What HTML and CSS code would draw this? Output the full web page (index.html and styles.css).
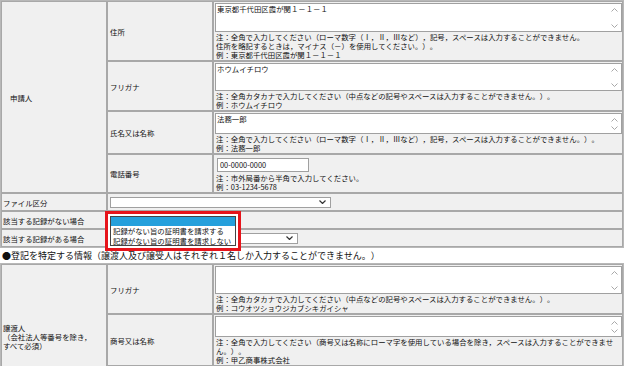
FILE: index.html
```html
<!DOCTYPE html>
<html lang="ja">
<head>
    <meta charset="UTF-8">
    <title>申請書入力</title>
    <link rel="stylesheet" href="styles.css">
</head>
<body>

<!-- 申請人 -->
<table class="form">
    <colgroup><col class="c1"><col class="c2"><col></colgroup>
    <tr>
        <td rowspan="4" class="head indent">申請人</td>
        <td class="label">住所</td>
        <td class="field">
            <div class="area tall">
                <div class="area-text">東京都千代田区霞が関１－１－１</div>
                <div class="scroll">
                    <svg width="7" height="4" viewBox="0 0 7 4"><polyline points="0.5,3.5 3.5,0.5 6.5,3.5" /></svg>
                    <svg width="7" height="4" viewBox="0 0 7 4"><polyline points="0.5,0.5 3.5,3.5 6.5,0.5" /></svg>
                </div>
            </div>
            <div class="note">注：全角で入力してください（ローマ数字（<span class="num">Ⅰ</span>，<span class="num">Ⅱ</span>，<span class="num">Ⅲ</span>など），記号，スペースは入力することができません。<br>住所を略記するときは，マイナス（－）を使用してください。）。<br>例：東京都千代田区霞が関１－１－１</div>
        </td>
    </tr>
    <tr>
        <td class="label">フリガナ</td>
        <td class="field">
            <div class="area">
                <div class="area-text">ホウムイチロウ</div>
                <div class="scroll">
                    <svg width="7" height="4" viewBox="0 0 7 4"><polyline points="0.5,3.5 3.5,0.5 6.5,3.5" /></svg>
                    <svg width="7" height="4" viewBox="0 0 7 4"><polyline points="0.5,0.5 3.5,3.5 6.5,0.5" /></svg>
                </div>
            </div>
            <div class="note">注：全角カタカナで入力してください（中点などの記号やスペースは入力することができません。）。<br>例：ホウムイチロウ</div>
        </td>
    </tr>
    <tr>
        <td class="label">氏名又は名称</td>
        <td class="field">
            <div class="area short">
                <div class="area-text">法務一郎</div>
                <div class="scroll">
                    <svg width="7" height="4" viewBox="0 0 7 4"><polyline points="0.5,3.5 3.5,0.5 6.5,3.5" /></svg>
                    <svg width="7" height="4" viewBox="0 0 7 4"><polyline points="0.5,0.5 3.5,3.5 6.5,0.5" /></svg>
                </div>
            </div>
            <div class="note">注：全角で入力してください（ローマ数字（<span class="num">Ⅰ</span>，<span class="num">Ⅱ</span>，<span class="num">Ⅲ</span>など），記号，スペースは入力することができません。）。<br>例：法務一郎</div>
        </td>
    </tr>
    <tr>
        <td class="label">電話番号</td>
        <td class="field">
            <div class="input">00-0000-0000</div>
            <div class="note">注：市外局番から半角で入力してください。<br>例：03-1234-5678</div>
        </td>
    </tr>
    <tr class="row-s">
        <td class="head">ファイル区分</td>
        <td colspan="2" class="pick">
            <div class="select wide">
                <svg width="7" height="4" viewBox="0 0 7 4"><polyline points="0.5,0.5 3.5,3.5 6.5,0.5" /></svg>
            </div>
        </td>
    </tr>
    <tr class="row-s">
        <td class="head">該当する記録がない場合</td>
        <td colspan="2" class="pick open">
            <!-- open list of the select -->
            <div class="popup">
                <ul class="options">
                    <li class="selected">&nbsp;</li>
                    <li>記録がない旨の証明書を請求する</li>
                    <li>記録がない旨の証明書を請求しない</li>
                </ul>
            </div>
        </td>
    </tr>
    <tr class="row-s">
        <td class="head">該当する記録がある場合</td>
        <td colspan="2" class="pick">
            <div class="select">
                <svg width="7" height="4" viewBox="0 0 7 4"><polyline points="0.5,0.5 3.5,3.5 6.5,0.5" /></svg>
            </div>
        </td>
    </tr>
</table>

<div class="section">●登記を特定する情報（譲渡人及び譲受人はそれぞれ１名しか入力することができません。）</div>

<!-- 譲渡人 -->
<table class="form">
    <colgroup><col class="c1"><col class="c2"><col></colgroup>
    <tr>
        <td rowspan="3" class="head">譲渡人<br>（会社法人等番号を除き，<br>すべて必須）</td>
        <td class="label">フリガナ</td>
        <td class="field">
            <div class="area">
                <div class="area-text"></div>
                <div class="scroll">
                    <svg width="7" height="4" viewBox="0 0 7 4"><polyline points="0.5,3.5 3.5,0.5 6.5,3.5" /></svg>
                    <svg width="7" height="4" viewBox="0 0 7 4"><polyline points="0.5,0.5 3.5,3.5 6.5,0.5" /></svg>
                </div>
            </div>
            <div class="note">注：全角カタカナで入力してください（中点などの記号やスペースは入力することができません。）。<br>例：コウオツショウジカブシキガイシャ</div>
        </td>
    </tr>
    <tr>
        <td class="label">商号又は名称</td>
        <td class="field">
            <div class="area short">
                <div class="area-text"></div>
                <div class="scroll">
                    <svg width="7" height="4" viewBox="0 0 7 4"><polyline points="0.5,3.5 3.5,0.5 6.5,3.5" /></svg>
                    <svg width="7" height="4" viewBox="0 0 7 4"><polyline points="0.5,0.5 3.5,3.5 6.5,0.5" /></svg>
                </div>
            </div>
            <div class="note">注：全角で入力してください（商号又は名称にローマ字を使用している場合を除き，スペースは入力することができません。）。<br>例：甲乙商事株式会社</div>
        </td>
    </tr>
    <tr>
        <td class="label">本店又は主たる事務所</td>
        <td class="field">
            <div class="area short">
                <div class="area-text"></div>
                <div class="scroll">
                    <svg width="7" height="4" viewBox="0 0 7 4"><polyline points="0.5,3.5 3.5,0.5 6.5,3.5" /></svg>
                    <svg width="7" height="4" viewBox="0 0 7 4"><polyline points="0.5,0.5 3.5,3.5 6.5,0.5" /></svg>
                </div>
            </div>
            <div class="note">注：全角で入力してください。<br>例：東京都千代田区霞が関１－１－１</div>
        </td>
    </tr>
</table>

</body>
</html>
```

FILE: styles.css
```css
body {
    margin: 0;
    font-family: "Noto Sans CJK JP", "Noto Sans", sans-serif;
    font-size: 7.4px;
    line-height: 9px;
    color: #111;
    background-color: #fff;
    text-spacing-trim: space-all;
}
.form {
    width: 624px;
    table-layout: fixed;
    border-collapse: separate;
    border-spacing: 0;
    border: 1px solid #b8b8b8;
}
.form col.c1 {
    width: 106px;
}
.form col.c2 {
    width: 106px;
}
.form td {
    background-color: #f0f0f0;
    border: 1px solid #a8a8a8;
    padding: 1px 1px;
    vertical-align: middle;
}
.form td.indent {
    padding-left: 8px;
}
.form td.label {
    padding-left: 2px;
}
.form td.field {
    padding: 1px 0 1px 1px;
}
.area {
    display: flex;
    height: 28px;
    box-sizing: border-box;
    background-color: #fff;
    border: 1px solid #a0a0a0;
}
.area.tall {
    height: 29px;
}
.area.short {
    height: 21px;
}
.area-text {
    flex: 1;
    padding: 0 1px;
    line-height: 10px;
}
.scroll {
    display: flex;
    flex-direction: column;
    justify-content: space-between;
    padding: 4px 3px 3px;
}
.scroll svg polyline {
    fill: none;
    stroke: #a8a8a8;
    stroke-width: 1;
}
.note {
    padding: 0 0 0 1px;
}
.num {
    display: inline-block;
    width: 1em;
    text-align: center;
}
.input {
    width: 92px;
    height: 14px;
    box-sizing: border-box;
    margin: 2px 0 1px 2px;
    padding: 0 2px;
    line-height: 12px;
    background-color: #fff;
    border: 1px solid #a0a0a0;
}
.row-s td {
    height: 16px;
    padding-top: 0;
    padding-bottom: 0;
}
.form td.pick {
    padding-left: 2px;
}
.form td.open {
    position: relative;
}
.select {
    display: flex;
    justify-content: flex-end;
    align-items: center;
    width: 188px;
    height: 11px;
    box-sizing: border-box;
    background-color: #fff;
    border: 1px solid #a0a0a0;
    padding-right: 4px;
}
.select.wide {
    width: 221px;
}
.select svg polyline {
    fill: none;
    stroke: #333;
    stroke-width: 1.2;
}
.popup {
    position: absolute;
    left: -3px;
    top: -1px;
    z-index: 2;
    width: 126px;
    padding: 2px;
    border: 3px solid #e6141b;
    background-color: #fff;
}
.options {
    list-style: none;
    margin: 0;
    padding: 0;
    border: 1px solid #444;
    background-color: #fff;
}
.options li {
    height: 9.5px;
    line-height: 9.5px;
    padding-left: 2px;
    white-space: nowrap;
}
.options li.selected {
    height: 9px;
    background-color: #25a0dc;
}
.section {
    height: 15px;
    line-height: 15px;
    padding-left: 2px;
    font-size: 9px;
    white-space: nowrap;
}
```
